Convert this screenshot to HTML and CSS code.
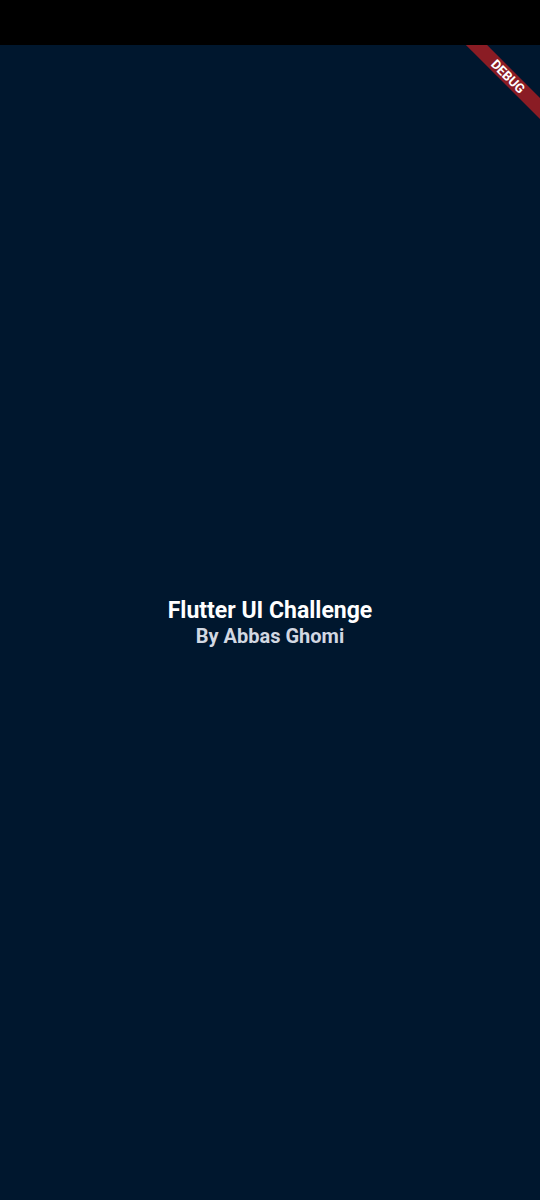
FILE: index.html
```html
<!DOCTYPE html>
<html>
<head>
<meta charset="utf-8">
<link rel="stylesheet" href="styles.css">
</head>
<body>
<div class="phone">
  <div class="status-bar"></div>
  <div class="app">
    <div class="intro">
      <div class="title">Flutter UI Challenge</div>
      <div class="subtitle">By Abbas Ghomi</div>
    </div>
    <div class="debug-banner">DEBUG</div>
  </div>
</div>
</body>
</html>
```
FILE: styles.css
```css
html, body {
  margin: 0;
  padding: 0;
  background: #00172e;
}
.phone {
  width: 540px;
  height: 1200px;
  display: flex;
  flex-direction: column;
  font-family: Roboto, "Noto Sans", sans-serif;
}
.status-bar {
  height: 45px;
  background: #000000;
}
.app {
  flex: 1;
  position: relative;
  overflow: hidden;
  background: #00172e;
  display: flex;
  align-items: center;
  justify-content: center;
}
.intro {
  display: flex;
  flex-direction: column;
  align-items: center;
}
.title {
  color: #ffffff;
  font-size: 23px;
  font-weight: 700;
  line-height: 27px;
}
.subtitle {
  color: #d2d8e2;
  font-size: 20px;
  font-weight: 700;
  line-height: 24px;
}
.debug-banner {
  position: absolute;
  left: 448px;
  top: 24px;
  width: 120px;
  height: 15px;
  line-height: 15px;
  background: #8a1c24;
  color: #ffffff;
  font-size: 13px;
  font-weight: 700;
  text-align: center;
  transform: rotate(45deg);
}
```
